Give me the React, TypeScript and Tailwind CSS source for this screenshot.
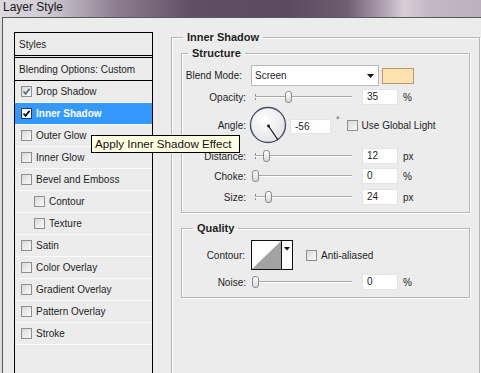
import type { ReactNode } from "react";

type StyleItem = { label: string; checked?: boolean; selected?: boolean; sub?: boolean };

const styleItems: StyleItem[] = [
  { label: "Drop Shadow", checked: true },
  { label: "Inner Shadow", checked: true, selected: true },
  { label: "Outer Glow" },
  { label: "Inner Glow" },
  { label: "Bevel and Emboss" },
  { label: "Contour", sub: true },
  { label: "Texture", sub: true },
  { label: "Satin" },
  { label: "Color Overlay" },
  { label: "Gradient Overlay" },
  { label: "Pattern Overlay" },
  { label: "Stroke" },
];

function CheckBox({ checked, bright }: { checked?: boolean; bright?: boolean }) {
  return (
    <span
      className={`flex h-[11px] w-[11px] shrink-0 items-center justify-center border ${
        bright ? "border-[#1c3a66] bg-white" : "border-[#8e8f8f] bg-[linear-gradient(135deg,#d8d8d3,#fbfbfb)]"
      }`}
    >
      {checked && (
        <svg width="9" height="9" viewBox="0 0 9 9">
          <path
            d="M1.5 4.5 L3.6 6.8 L7.6 1.8"
            fill="none"
            stroke={bright ? "#111" : "#5a6f8f"}
            strokeWidth="1.8"
          />
        </svg>
      )}
    </span>
  );
}

function Slider({ thumb }: { thumb: string }) {
  return (
    <div className="relative ml-[6px] h-[14px] w-[100px] shrink-0">
      <div className="absolute left-[3px] top-[4px] h-[6px] w-px bg-[#8a8a8a]" />
      <div className="absolute left-[3px] right-0 top-[6px] h-px bg-[#a8a8a8]" />
      <div className="absolute left-[3px] right-0 top-[7px] h-px bg-white" />
      <div
        className={`absolute top-px h-[12px] w-[7px] rounded-[3px] border border-[#8a8a8a] bg-[linear-gradient(#ffffff,#d6d6d6)] ${thumb}`}
      />
    </div>
  );
}

function NumBox({ value, unit }: { value: string; unit: string }) {
  return (
    <>
      <div className="ml-[10px] h-[16px] w-[36px] border border-[#e4e4e4] bg-white pl-[4px] leading-[14px]">
        {value}
      </div>
      <span className="ml-[5px]">{unit}</span>
    </>
  );
}

function Label({ children, extra = "" }: { children: ReactNode; extra?: string }) {
  return <span className={`w-[64px] shrink-0 text-right ${extra}`}>{children}</span>;
}

function SliderRow({ label, thumb, value, unit, extra }: { label: string; thumb: string; value: string; unit: string; extra: string }) {
  return (
    <div className={`flex h-[18px] items-center ${extra}`}>
      <Label>{label}</Label>
      <Slider thumb={thumb} />
      <NumBox value={value} unit={unit} />
    </div>
  );
}

export default function App() {
  return (
    <div className="relative flex h-[373px] w-[481px] flex-col overflow-hidden bg-[#dedede] font-['Liberation_Sans',Arial,sans-serif] text-[10px] text-[#1e1e1e]">
      <div className="h-[17px] shrink-0 bg-[linear-gradient(90deg,#dcd9de_0%,#d0cad3_10%,#8d7e91_24%,#5f4f64_40%,#5b4b60_60%,#6d5d71_72%,#b2a4b4_80%,#d8cfd8_84%,#c4b8c6_89%,#bcafbe_100%)] pl-[3px] text-[12px] leading-[15px] text-[#1a1a1a]">
        Layer Style
      </div>

      <div className="ml-[2px] flex flex-1 border-l border-t border-[#5a5a5a] bg-[#ececec] pl-[11px] pt-[14px]">
        <div className="w-[139px] shrink-0 border-x border-t border-black">
          <div className="flex h-[23px] items-center border-b border-black pl-[4px]">Styles</div>
          <div className="mt-px flex h-[24px] items-center border-y border-black pl-[4px]">
            Blending Options: Custom
          </div>
          {styleItems.map((item) => (
            <div
              key={item.label}
              className={`flex h-[22px] items-center border-b border-[#fafafa] ${
                item.sub ? "pl-[19px]" : "pl-[6px]"
              } ${item.selected ? "bg-[#3399ff] font-bold text-white" : ""}`}
            >
              <CheckBox checked={item.checked} bright={item.selected} />
              <span className="ml-[4px]">{item.label}</span>
            </div>
          ))}
        </div>

        <fieldset className="ml-[18px] h-[400px] w-[309px] shrink-0 border border-[#b6b6b6] px-[9px] pt-[5px] shadow-[inset_1px_1px_0_#fff,1px_1px_0_#fff]">
          <legend className="ml-[2px] px-[4px] text-[11px] font-bold leading-[11px]">Inner Shadow</legend>

          <fieldset className="border border-[#b6b6b6] pb-[6px] pt-[6px] shadow-[inset_1px_1px_0_#fff,1px_1px_0_#fff]">
            <legend className="ml-[6px] px-[4px] text-[11px] font-bold leading-[11px]">Structure</legend>

            <div className="flex h-[21px] items-center">
              <Label extra="pr-[4px]">Blend Mode:</Label>
              <div className="ml-[5px] flex h-[21px] w-[128px] items-center border border-[#b9b9b9] bg-white pl-[3px]">
                <span className="flex-1">Screen</span>
                <svg width="7" height="4" viewBox="0 0 7 4" className="mr-[4px]">
                  <path d="M0 0 H7 L3.5 4 Z" fill="#111" />
                </svg>
              </div>
              <div className="ml-[3px] h-[16px] w-[32px] border border-[#b39c72] bg-[#fde2ae]" />
            </div>

            <SliderRow label="Opacity:" thumb="left-[33px]" value="35" unit="%" extra="mt-[2px]" />

            <div className="flex h-[38px] items-center">
              <Label>Angle:</Label>
              <svg width="38" height="38" viewBox="0 0 38 38" className="ml-[3px] shrink-0">
                <defs>
                  <radialGradient id="dial" cx="40%" cy="35%" r="70%">
                    <stop offset="0%" stopColor="#ffffff" />
                    <stop offset="100%" stopColor="#e2e2e6" />
                  </radialGradient>
                </defs>
                <circle cx="19" cy="19" r="17.5" fill="url(#dial)" stroke="#48506a" strokeWidth="1.4" />
                <line x1="19.5" y1="20" x2="29" y2="34" stroke="#111" strokeWidth="1.2" />
                <circle cx="19.5" cy="20" r="1.4" fill="#111" />
              </svg>
              <div className="ml-[3px] mt-[2px] h-[15px] w-[41px] border border-[#e4e4e4] bg-white pl-[4px] leading-[13px]">
                -56
              </div>
              <span className="ml-[5px] mb-[8px] text-[9px]">°</span>
              <span className="ml-[7px]">
                <CheckBox />
              </span>
              <span className="ml-[4px]">Use Global Light</span>
            </div>

            <SliderRow label="Distance:" thumb="left-[11px]" value="12" unit="px" extra="mt-[3px]" />
            <SliderRow label="Choke:" thumb="left-0" value="0" unit="%" extra="mt-[2px]" />
            <SliderRow label="Size:" thumb="left-[13px]" value="24" unit="px" extra="mt-[3px]" />
          </fieldset>

          <fieldset className="mt-[10px] border border-[#b6b6b6] pb-[6px] pt-[6px] shadow-[inset_1px_1px_0_#fff,1px_1px_0_#fff]">
            <legend className="ml-[11px] px-[4px] text-[11px] font-bold leading-[11px]">Quality</legend>

            <div className="flex h-[30px] items-center">
              <Label extra="pr-px">Contour:</Label>
              <svg width="42" height="30" viewBox="0 0 42 30" className="ml-[5px] shrink-0">
                <rect x="0.5" y="0.5" width="41" height="29" fill="#fff" stroke="#111" />
                <polygon points="1,29 30,1 30,29" fill="#a3a3a3" />
                <line x1="30.5" y1="0" x2="30.5" y2="30" stroke="#111" />
                <path d="M33 7 H39 L36 10.5 Z" fill="#111" />
              </svg>
              <span className="ml-[13px]">
                <CheckBox />
              </span>
              <span className="ml-[4px]">Anti-aliased</span>
            </div>

            <SliderRow label="Noise:" thumb="left-0" value="0" unit="%" extra="mt-[3px]" />
          </fieldset>
        </fieldset>
      </div>

      <div className="absolute left-[91px] top-[135px] h-[18px] w-[149px] border border-black bg-[#ffffe1] pl-[3px] text-[11.6px] leading-[16px] text-[#111]">
        Apply Inner Shadow Effect
      </div>
    </div>
  );
}
